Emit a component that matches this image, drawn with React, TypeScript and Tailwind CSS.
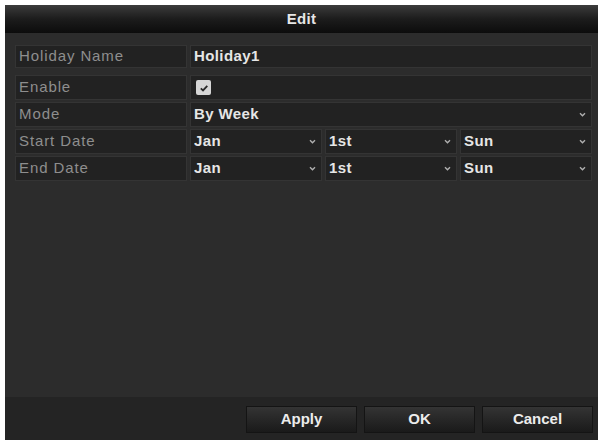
import React from "react";

const font = { fontFamily: '"Liberation Sans", Arial, sans-serif' };

function Chevron() {
  return (
    <svg width="7" height="5" viewBox="0 0 7 5" className="shrink-0">
      <path d="M1 1.2 L3.5 3.7 L6 1.2" fill="none" stroke="#b0b0b0" strokeWidth="1.4" />
    </svg>
  );
}

function Cell({
  children,
  className = "",
  select = false,
}: {
  children?: React.ReactNode;
  className?: string;
  select?: boolean;
}) {
  return (
    <div
      className={`flex items-center justify-between border border-[#343434] bg-[#222222] pl-[3px] pr-[5px] ${className}`}
    >
      <div className="truncate">{children}</div>
      {select && <Chevron />}
    </div>
  );
}

function Row({
  label,
  children,
  className = "h-[25px]",
}: {
  label: string;
  children: React.ReactNode;
  className?: string;
}) {
  return (
    <div className={`flex gap-[3px] ${className}`}>
      <Cell className="w-[172px] shrink-0 text-[15px] tracking-[0.9px] text-[#8e8e8e]">{label}</Cell>
      <div className="flex flex-1 gap-[3px] text-[15px] font-bold tracking-[0.4px] text-[#e6e6e6]">
        {children}
      </div>
    </div>
  );
}

function Checkbox() {
  return (
    <div className="ml-[2px] flex h-[15px] w-[15px] items-center justify-center rounded-[2px] bg-[#d6d6d6]">
      <svg width="10" height="10" viewBox="0 0 10 10">
        <path d="M1.8 5.4 L4 7.4 L8.3 2.8" fill="none" stroke="#2a2a2a" strokeWidth="1.8" />
      </svg>
    </div>
  );
}

function Button({ children }: { children: React.ReactNode }) {
  return (
    <button className="flex h-[27px] w-[111px] items-center justify-center border border-[#141414] bg-gradient-to-b from-[#343434] to-[#1a1a1a] text-[15px] font-bold text-[#ececec]">
      {children}
    </button>
  );
}

export default function App() {
  return (
    <div className="h-[440px] w-[598px] overflow-hidden bg-white pl-[5px] pt-[5px]" style={font}>
      <div className="flex h-full flex-col bg-[#2c2c2c]">
        <div className="flex h-[28px] shrink-0 items-center justify-center bg-gradient-to-b from-[#3c3c3c] via-[#1c1c1c] to-[#0c0c0c] text-[15px] font-bold tracking-[0.3px] text-[#e6e6e6]">
          Edit
        </div>
        <div className="flex flex-1 flex-col pl-[10px] pr-[6px] pt-[12px]">
          <Row label="Holiday Name" className="h-[23px]">
            <Cell className="flex-1">Holiday1</Cell>
          </Row>
          <div className="mt-[7px] flex flex-col gap-[2px]">
            <Row label="Enable">
              <Cell className="flex-1">
                <Checkbox />
              </Cell>
            </Row>
            <Row label="Mode">
              <Cell className="flex-1" select>
                By Week
              </Cell>
            </Row>
            <Row label="Start Date">
              <Cell className="flex-1" select>Jan</Cell>
              <Cell className="flex-1" select>1st</Cell>
              <Cell className="flex-1" select>Sun</Cell>
            </Row>
            <Row label="End Date">
              <Cell className="flex-1" select>Jan</Cell>
              <Cell className="flex-1" select>1st</Cell>
              <Cell className="flex-1" select>Sun</Cell>
            </Row>
          </div>
        </div>
        <div className="flex h-[43px] shrink-0 justify-end gap-[7px] bg-[#242424] pr-[5px] pt-[9px]">
          <Button>Apply</Button>
          <Button>OK</Button>
          <Button>Cancel</Button>
        </div>
      </div>
    </div>
  );
}
